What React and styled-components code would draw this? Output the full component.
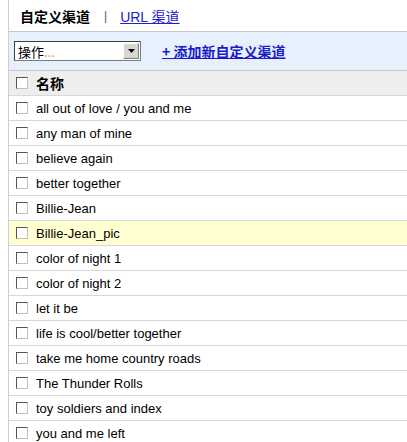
import React from "react";
import styled, { createGlobalStyle } from "styled-components";

const Global = createGlobalStyle`
  html, body { margin: 0; padding: 0; background: #fff; }
  body { font-family: "Liberation Sans", Arial, "Noto Sans CJK SC", sans-serif; font-size: 13px; color: #000; }
`;

const Frame = styled.div`
  margin-left: 8px;
  border-left: 1px solid #cfcfcf;
  min-height: 442px;
`;

const Tabs = styled.div`
  height: 31px;
  display: flex;
  align-items: center;
  padding-left: 11px;
  border-bottom: 1px solid #c8c8c8;
  font-family: "Noto Sans CJK SC", "Liberation Sans", sans-serif;
  font-size: 14px;
`;

const ActiveTab = styled.span`
  font-weight: bold;
  color: #000;
`;

const Sep = styled.span`
  color: #555;
  margin: 0 13px 0 14px;
  font-family: "Liberation Sans", sans-serif;
  font-size: 12px;
`;

const TabLink = styled.a`
  color: #2020cc;
  text-decoration: underline;
  font-family: "Liberation Sans", "Noto Sans CJK SC", sans-serif;
  font-size: 14px;
`;

const Toolbar = styled.div`
  height: 38px;
  background: #e6f1fd;
  border-bottom: 1px solid #c8c8c8;
  display: flex;
  align-items: center;
  padding-left: 5px;
`;

const Select = styled.div`
  width: 127px;
  height: 20px;
  box-sizing: border-box;
  border: 1px solid #7a7a7a;
  border-top-color: #404040;
  border-left-color: #404040;
  background: #fff;
  display: flex;
  align-items: center;
  justify-content: space-between;
  font-family: "Noto Sans CJK SC", sans-serif;
  font-size: 13px;
  padding-left: 3px;
`;

const Dots = styled.span`
  color: #c9a040;
`;

const Arrow = styled.span`
  width: 16px;
  height: 16px;
  margin-right: 1px;
  box-sizing: border-box;
  background: #d9d6cf;
  border: 1px solid #fff;
  border-right-color: #808080;
  border-bottom-color: #808080;
  display: flex;
  align-items: center;
  justify-content: center;
`;

const AddLink = styled.a`
  margin-left: 21px;
  color: #1a1acc;
  font-weight: bold;
  text-decoration: underline;
  font-family: "Noto Sans CJK SC", sans-serif;
  font-size: 14px;
`;

const Row = styled.div`
  height: 24px;
  border-bottom: 1px solid #d8d8d8;
  display: flex;
  align-items: center;
  padding-left: 7px;
  background: ${(p) => (p.$header ? "#eeeeee" : p.$hl ? "#ffffd2" : "#fff")};
  font-family: ${(p) => (p.$header ? '"Noto Sans CJK SC", sans-serif' : '"Liberation Sans", Arial, sans-serif')};
  font-weight: ${(p) => (p.$header ? "bold" : "normal")};
  font-size: ${(p) => (p.$header ? "14px" : "13px")};
  color: #000;
`;

const Box = styled.span`
  width: 12px;
  height: 12px;
  box-sizing: border-box;
  border: 1px solid #555;
  border-right-color: #c0c0c0;
  border-bottom-color: #c0c0c0;
  background: #fff;
  margin-right: 8px;
  flex-shrink: 0;
`;

const items = [
  "all out of love / you and me",
  "any man of mine",
  "believe again",
  "better together",
  "Billie-Jean",
  "Billie-Jean_pic",
  "color of night 1",
  "color of night 2",
  "let it be",
  "life is cool/better together",
  "take me home country roads",
  "The Thunder Rolls",
  "toy soldiers and index",
  "you and me left",
];

export default function App() {
  return (
    <>
      <Global />
      <Frame>
        <Tabs>
          <ActiveTab>自定义渠道</ActiveTab>
          <Sep>|</Sep>
          <TabLink href="#">URL 渠道</TabLink>
        </Tabs>
        <Toolbar>
          <Select>
            <span>
              操作<Dots>...</Dots>
            </span>
            <Arrow>
              <svg width="7" height="4" viewBox="0 0 7 4">
                <path d="M0 0H7L3.5 4Z" fill="#000" />
              </svg>
            </Arrow>
          </Select>
          <AddLink href="#">+ 添加新自定义渠道</AddLink>
        </Toolbar>
        <Row $header>
          <Box />
          名称
        </Row>
        {items.map((t) => (
          <Row key={t} $hl={t === "Billie-Jean_pic"}>
            <Box />
            {t}
          </Row>
        ))}
      </Frame>
    </>
  );
}
